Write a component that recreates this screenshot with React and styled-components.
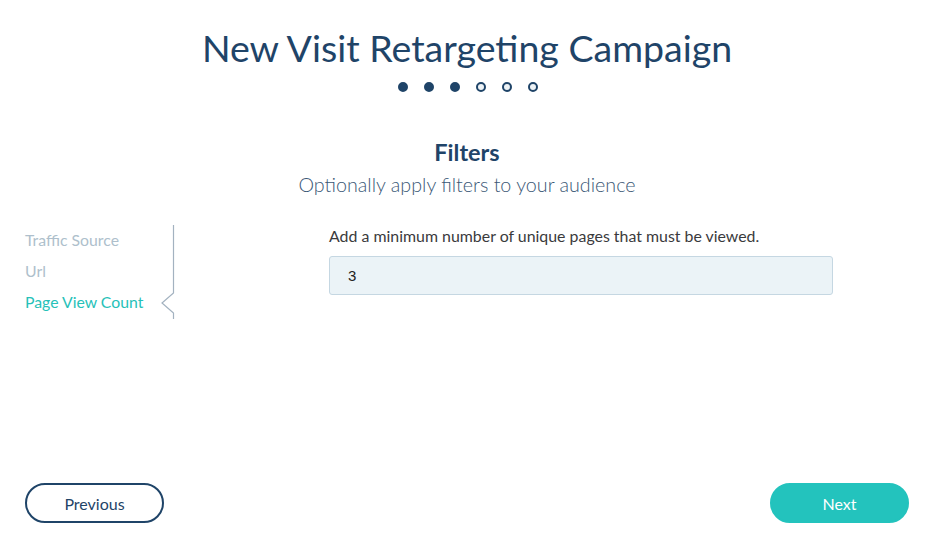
import React, { useState } from "react";
import styled, { createGlobalStyle } from "styled-components";

const GlobalStyle = createGlobalStyle`
  html, body {
    margin: 0;
    padding: 0;
    background: #ffffff;
    font-family: Lato, "Open Sans", sans-serif;
  }
  * { box-sizing: border-box; }
`;

const Page = styled.div`
  width: 936px;
  height: 544px;
  display: flex;
  flex-direction: column;
  padding: 25px 27px 21px 25px;
`;

const Title = styled.h1`
  margin: 0;
  font-size: 37.5px;
  font-weight: 400;
  line-height: 46px;
  color: #1f4468;
  text-align: center;
`;

const Steps = styled.div`
  display: flex;
  justify-content: center;
  gap: 16px;
  margin-top: 11px;
  padding-left: 2px;
`;

const Dot = styled.span`
  width: 10px;
  height: 10px;
  border-radius: 50%;
  background: ${({ $done }) => ($done ? "#1f4468" : "#eef3f6")};
  border: 2px solid #1f4468;
`;

const Heading = styled.div`
  margin-top: 46px;
  text-align: center;
`;

const SectionTitle = styled.h2`
  margin: 0;
  font-size: 23.5px;
  font-weight: 700;
  line-height: 28px;
  color: #1f4468;
`;

const Subtitle = styled.p`
  margin: 7px 0 0;
  font-size: 19.7px;
  font-weight: 300;
  line-height: 24px;
  color: #3b5876;
`;

const Body = styled.div`
  display: grid;
  grid-template-columns: 150px 504px;
  column-gap: 154px;
  margin-top: 27px;
  flex: 1;
`;

const Sidebar = styled.nav`
  position: relative;
  display: flex;
  flex-direction: column;
  gap: 12px;
  padding-top: 6px;
  height: 95px;
`;

const NavItem = styled.div`
  font-size: 15.8px;
  line-height: 19px;
  color: ${({ $active }) => ($active ? "#26c1b8" : "#aebfcc")};
`;

const Rail = styled.svg`
  position: absolute;
  right: 0;
  top: 1px;
`;

const Content = styled.div`
  display: flex;
  flex-direction: column;
  padding-top: 2px;
`;

const Label = styled.label`
  font-size: 15.9px;
  line-height: 20px;
  color: #3a3a3c;
`;

const Input = styled.input`
  margin-top: 10px;
  width: 504px;
  height: 39px;
  padding: 0 18px;
  border: 1px solid #c5d7e2;
  border-radius: 3px;
  background: #ebf3f7;
  font-family: "Liberation Sans", Arial, sans-serif;
  font-size: 15px;
  color: #222;
  outline: none;
`;

const Footer = styled.div`
  display: flex;
  justify-content: space-between;
  align-items: center;
`;

const Button = styled.button`
  width: 139px;
  height: 40px;
  border-radius: 20px;
  font-family: Lato, sans-serif;
  font-size: 16px;
  cursor: pointer;
  border: 2px solid ${({ $primary }) => ($primary ? "#23c3bd" : "#1f4468")};
  background: ${({ $primary }) => ($primary ? "#23c3bd" : "#ffffff")};
  color: ${({ $primary }) => ($primary ? "#ffffff" : "#1f4468")};
`;

const filters = ["Traffic Source", "Url", "Page View Count"];

export default function App() {
  const [count, setCount] = useState("3");
  const active = 2;

  return (
    <>
      <GlobalStyle />
      <Page>
        <Title>New Visit Retargeting Campaign</Title>
        <Steps>
          {[0, 1, 2, 3, 4, 5].map((i) => (
            <Dot key={i} $done={i < 3} />
          ))}
        </Steps>
        <Heading>
          <SectionTitle>Filters</SectionTitle>
          <Subtitle>Optionally apply filters to your audience</Subtitle>
        </Heading>
        <Body>
          <Sidebar>
            {filters.map((f, i) => (
              <NavItem key={f} $active={i === active}>
                {f}
              </NavItem>
            ))}
            <Rail width="16" height="94" viewBox="0 0 16 94">
              <path
                d="M14.5 0 V68 L3 78 L14.5 88 V94"
                fill="none"
                stroke="#a3b2c0"
                strokeWidth="1.2"
              />
            </Rail>
          </Sidebar>
          <Content>
            <Label htmlFor="pvc">
              Add a minimum number of unique pages that must be viewed.
            </Label>
            <Input
              id="pvc"
              value={count}
              onChange={(e) => setCount(e.target.value)}
            />
          </Content>
        </Body>
        <Footer>
          <Button>Previous</Button>
          <Button $primary>Next</Button>
        </Footer>
      </Page>
    </>
  );
}
